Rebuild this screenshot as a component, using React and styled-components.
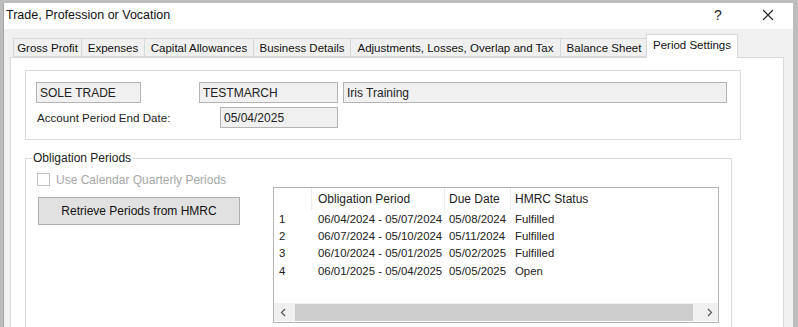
import styled, { createGlobalStyle } from "styled-components";

const Global = createGlobalStyle`
  html, body { margin: 0; padding: 0; background: #bdbdbd; overflow: hidden; }
  body { font-family: "Liberation Sans", Arial, sans-serif; font-size: 12px; color: #1a1a1a; }
  * { box-sizing: border-box; }
`;

const Window = styled.div`
  margin: 3px 0 0 3px;
  width: 790px;
  height: 324px;
  overflow: hidden;
  background: #f0f0f0;
  border-left: 1px solid #a5a5a5;
  display: flex;
  flex-direction: column;
`;

const TitleBar = styled.div`
  height: 26px;
  flex-shrink: 0;
  background: #fff;
  display: flex;
  align-items: center;
  padding-left: 2px;
`;

const Title = styled.div`
  flex: 1;
  font-size: 12.5px;
  color: #111;
  padding-bottom: 3px;
`;

const CaptionBtn = styled.div`
  width: 50px;
  height: 26px;
  display: flex;
  align-items: center;
  justify-content: center;
  font-size: 14px;
  color: #222;
  padding-bottom: 3px;
`;

const TabStrip = styled.div`
  display: flex;
  align-items: flex-end;
  height: 28px;
  flex-shrink: 0;
  padding: 5px 0 0 9px;
`;

const Tab = styled.div`
  width: ${(p) => p.w}px;
  height: ${(p) => (p.active ? 24 : 19)}px;
  margin: ${(p) => (p.active ? "0 -2px -1px -2px" : "0")};
  background: ${(p) => (p.active ? "#fff" : "#f0f0f0")};
  border: 1px solid #d9d9d9;
  border-bottom: ${(p) => (p.active ? "none" : "1px solid #d9d9d9")};
  border-left: ${(p) => (p.first || p.active ? "1px solid #d9d9d9" : "none")};
  display: flex;
  align-items: ${(p) => (p.active ? "flex-start" : "center")};
  padding-top: ${(p) => (p.active ? "4px" : "0")};
  justify-content: center;
  white-space: nowrap;
  font-size: 11.5px;
  color: #111;
  position: relative;
  z-index: ${(p) => (p.active ? 1 : 0)};
`;

const Panel = styled.div`
  margin-left: 6px;
  width: 774px;
  flex: 1;
  background: #fff;
  border: 1px solid #d9d9d9;
  border-bottom: none;
  padding: 12px 0 0 14px;
`;

const GroupBox = styled.div`
  width: 716px;
  height: 70px;
  border: 1px solid #dcdcdc;
  padding: 11px 0 0 10px;
  display: flex;
  flex-direction: column;
  gap: 4px;
`;

const Row = styled.div`
  display: flex;
  align-items: center;
`;

const Field = styled.div`
  width: ${(p) => p.w}px;
  margin-left: ${(p) => p.ml || 0}px;
  height: 21px;
  background: #f0f0f0;
  border: 1px solid #b4b4b4;
  display: flex;
  align-items: center;
  padding-left: 3px;
  white-space: nowrap;
  overflow: hidden;
  color: #222;
`;

const Label = styled.div`
  width: 184px;
  padding-left: 1px;
  font-size: 11.6px;
  color: #222;
`;

const Fieldset = styled.fieldset`
  margin: 11px 0 0 0;
  width: 707px;
  height: 200px;
  border: 1px solid #dcdcdc;
  border-bottom: none;
  padding: 0 0 0 11px;
  min-width: 0;
`;

const Legend = styled.legend`
  margin-left: -5px;
  padding: 0 1px;
  line-height: 14px;
  color: #222;
`;

const Content = styled.div`
  display: flex;
`;

const LeftCol = styled.div`
  width: 236px;
  padding-top: 6px;
  display: flex;
  flex-direction: column;
`;

const CheckRow = styled.div`
  display: flex;
  align-items: center;
  height: 17px;
  color: #a7a7a7;
  gap: 6px;
`;

const CheckBox = styled.span`
  width: 13px;
  height: 13px;
  border: 1px solid #c4c4c4;
  background: #fff;
`;

const Button = styled.div`
  margin: 9px 0 0 1px;
  width: 202px;
  height: 28px;
  background: #e1e1e1;
  border: 1px solid #adadad;
  display: flex;
  align-items: center;
  justify-content: center;
  color: #111;
`;

const ListView = styled.div`
  margin-top: 22px;
  width: 446px;
  height: 136px;
  border: 1px solid #b4b4b4;
  display: flex;
  flex-direction: column;
`;

const Grid = styled.div`
  display: grid;
  grid-template-columns: 38px 133px 66px 1fr;
  grid-template-rows: 22px;
  grid-auto-rows: 17.4px;
  flex: 1;
  align-content: start;
`;

const HeadCell = styled.div`
  display: flex;
  align-items: center;
  padding-left: ${(p) => p.pl}px;
  border-right: ${(p) => (p.last ? "none" : "1px solid #ececec")};
  color: #222;
`;

const Cell = styled.div`
  display: flex;
  align-items: center;
  padding-left: ${(p) => p.pl}px;
  white-space: nowrap;
  font-size: 11.4px;
  color: #222;
`;

const ScrollBar = styled.div`
  height: 18px;
  margin-bottom: 1px;
  background: #f0f0f0;
  display: flex;
  align-items: center;
`;

const Arrow = styled.div`
  width: 17px;
  height: 18px;
  display: flex;
  align-items: center;
  justify-content: center;
`;

const Thumb = styled.div`
  flex: 1;
  height: 17px;
  margin: 0 8px 0 4px;
  background: #cdcdcd;
`;

const tabs = [
  ["Gross Profit", 69],
  ["Expenses", 63],
  ["Capital Allowances", 109],
  ["Business Details", 97],
  ["Adjustments, Losses, Overlap and Tax", 210],
  ["Balance Sheet", 87],
  ["Period Settings", 92, true],
];

const rows = [
  ["1", "06/04/2024 - 05/07/2024", "05/08/2024", "Fulfilled"],
  ["2", "06/07/2024 - 05/10/2024", "05/11/2024", "Fulfilled"],
  ["3", "06/10/2024 - 05/01/2025", "05/02/2025", "Fulfilled"],
  ["4", "06/01/2025 - 05/04/2025", "05/05/2025", "Open"],
];

const pads = [5, 6, 4, 4];

export default function App() {
  return (
    <>
      <Global />
      <Window>
        <TitleBar>
          <Title>Trade, Profession or Vocation</Title>
          <CaptionBtn>?</CaptionBtn>
          <CaptionBtn>
            <svg width="12" height="12" viewBox="0 0 12 12">
              <path d="M1 1 L11 11 M11 1 L1 11" stroke="#222" strokeWidth="1.1" fill="none" />
            </svg>
          </CaptionBtn>
        </TitleBar>
        <TabStrip>
          {tabs.map(([t, w, active], i) => (
            <Tab key={t} w={w} active={active} first={i === 0}>
              {t}
            </Tab>
          ))}
        </TabStrip>
        <Panel>
          <GroupBox>
            <Row>
              <Field w={105}>SOLE TRADE</Field>
              <Field w={139} ml={58}>TESTMARCH</Field>
              <Field w={384} ml={5}>Iris Training</Field>
            </Row>
            <Row>
              <Label>Account Period End Date:</Label>
              <Field w={118}>05/04/2025</Field>
            </Row>
          </GroupBox>
          <Fieldset>
            <Legend>Obligation Periods</Legend>
            <Content>
              <LeftCol>
                <CheckRow>
                  <CheckBox />
                  Use Calendar Quarterly Periods
                </CheckRow>
                <Button>Retrieve Periods from HMRC</Button>
              </LeftCol>
              <ListView>
                <Grid>
                  <HeadCell pl={5} />
                  <HeadCell pl={6}>Obligation Period</HeadCell>
                  <HeadCell pl={4}>Due Date</HeadCell>
                  <HeadCell pl={4} last>HMRC Status</HeadCell>
                  {rows.map((r) =>
                    r.map((c, j) => (
                      <Cell key={r[0] + j} pl={pads[j]}>
                        {c}
                      </Cell>
                    ))
                  )}
                </Grid>
                <ScrollBar>
                  <Arrow>
                    <svg width="6" height="9" viewBox="0 0 6 9">
                      <path d="M5 1 L1.5 4.5 L5 8" stroke="#555" strokeWidth="1.2" fill="none" />
                    </svg>
                  </Arrow>
                  <Thumb />
                  <Arrow>
                    <svg width="6" height="9" viewBox="0 0 6 9">
                      <path d="M1 1 L4.5 4.5 L1 8" stroke="#555" strokeWidth="1.2" fill="none" />
                    </svg>
                  </Arrow>
                </ScrollBar>
              </ListView>
            </Content>
          </Fieldset>
        </Panel>
      </Window>
    </>
  );
}
